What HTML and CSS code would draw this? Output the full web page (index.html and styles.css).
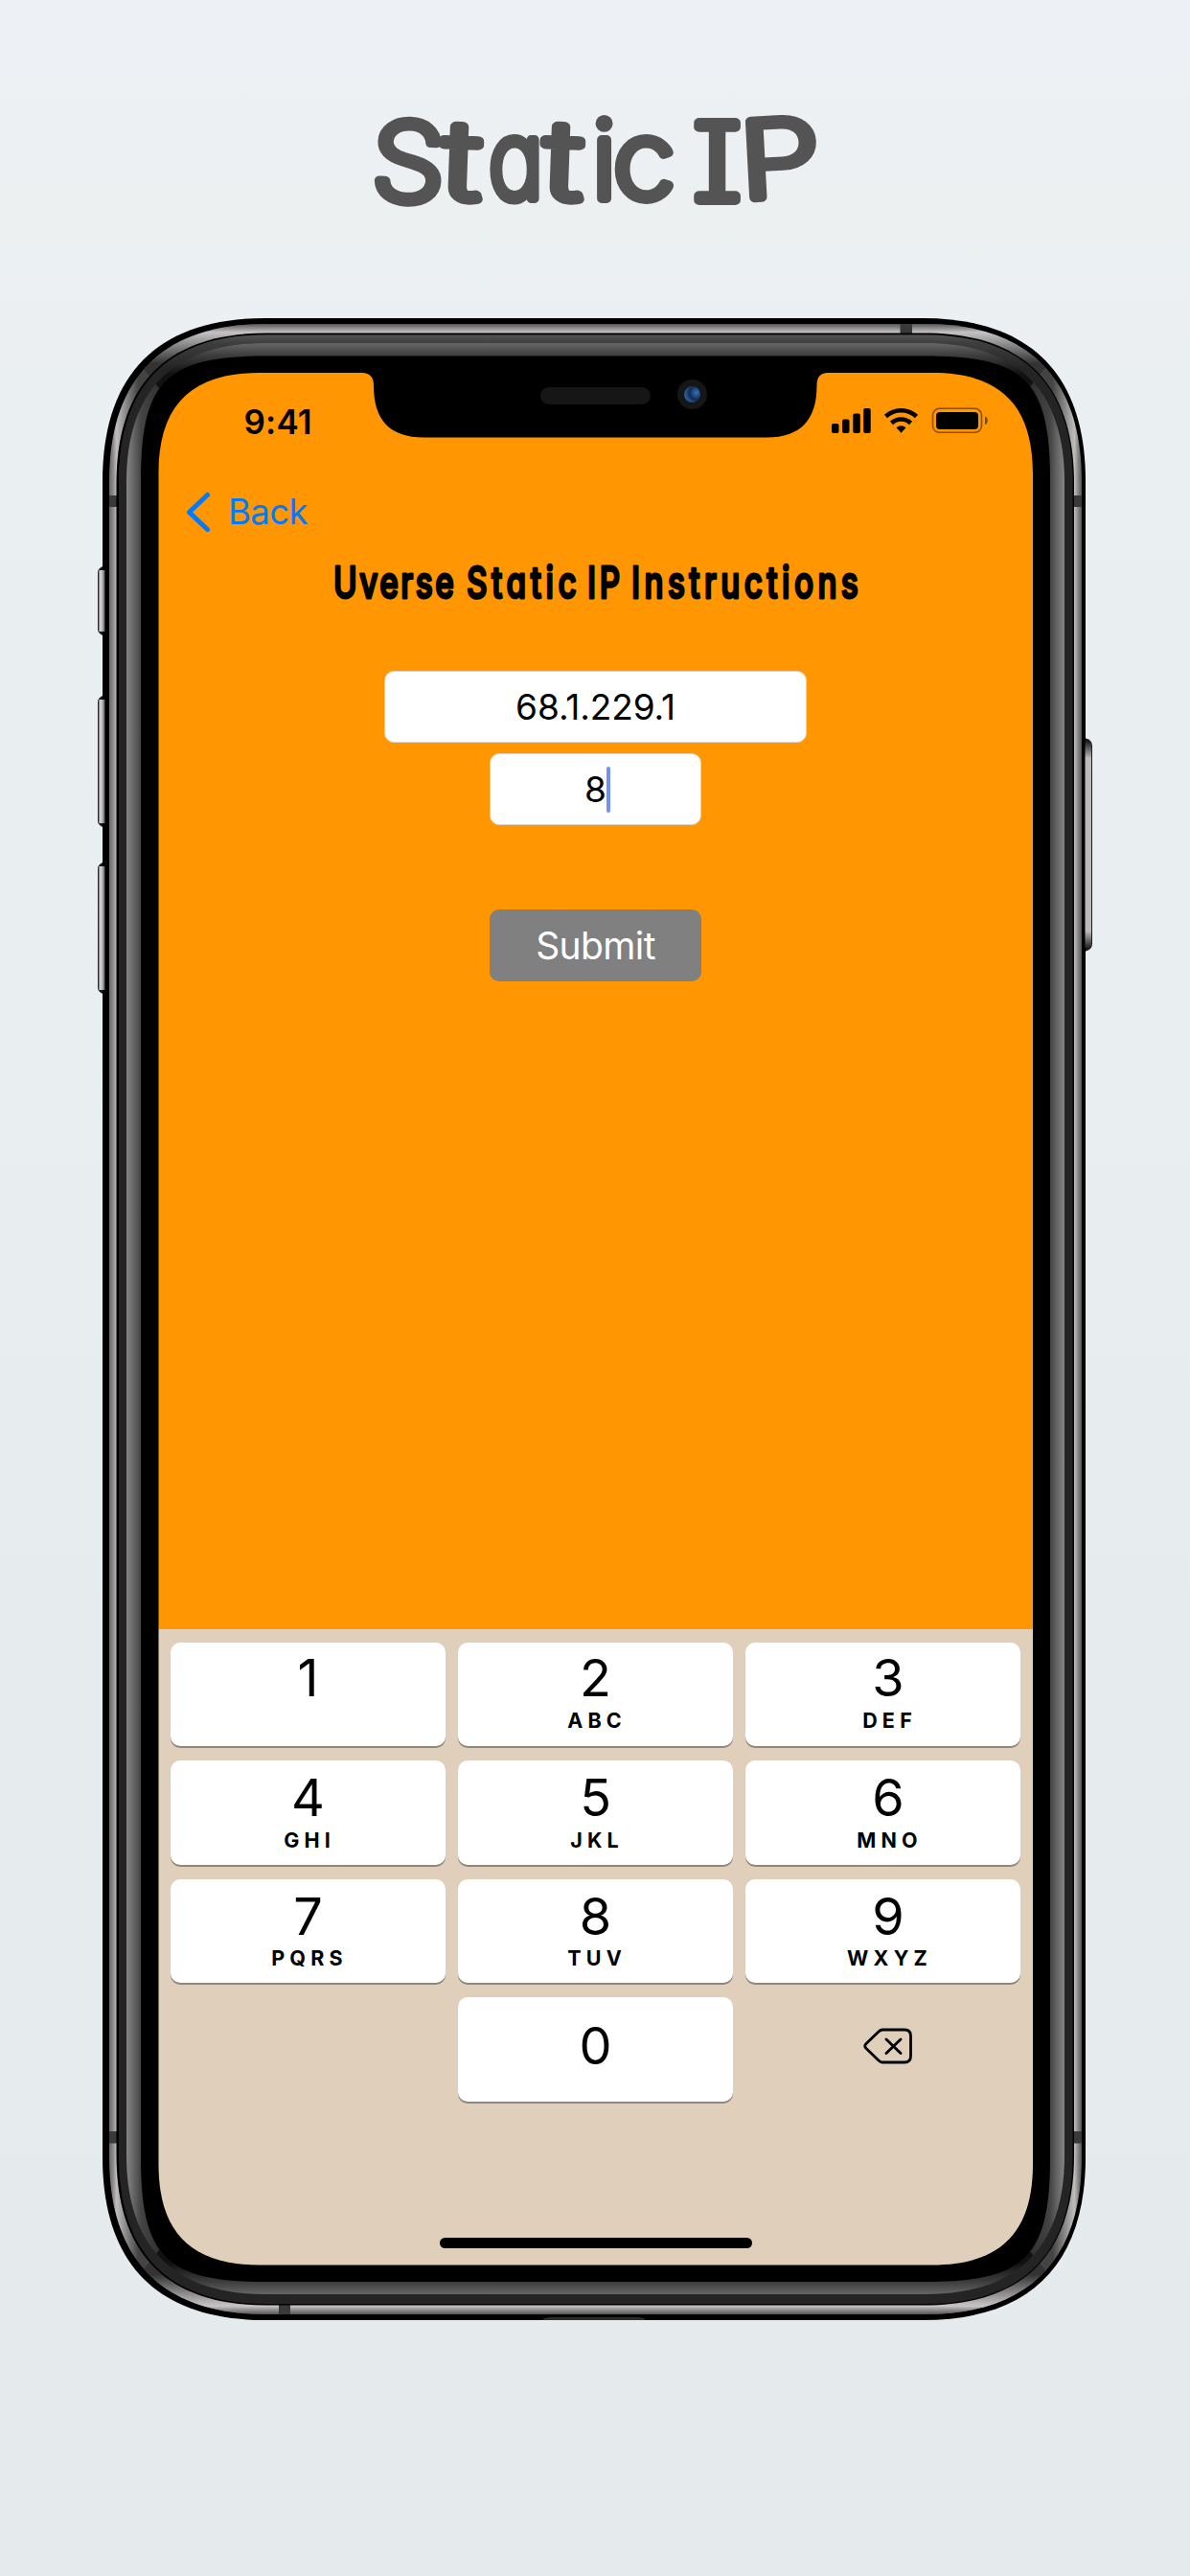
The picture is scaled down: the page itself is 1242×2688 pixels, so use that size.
FILE: index.html
```html
<!DOCTYPE html>
<html lang="en">
<head>
<meta charset="utf-8">
<title>Static IP</title>
<link rel="stylesheet" href="styles.css">
</head>
<body>
<main class="page">
  <svg class="headline" viewBox="360 90 520 150" role="heading" aria-label="Static IP">
    <g class="headline-text">
      <text transform="translate(387 208) rotate(2) scale(1.090 1)">S</text>
      <text transform="translate(461 207) rotate(2) scale(1.300 1)">t</text>
      <text transform="translate(510 207) scale(.860 1)">a</text>
      <text transform="translate(567 207) rotate(2) scale(1.300 1)">t</text>
      <text transform="translate(618 207)">i</text>
      <text transform="translate(640 207) scale(1.050 1)">c</text>
      <text transform="translate(723 209) scale(1.150 1)">I</text>
      <text transform="translate(774 207) rotate(-3) scale(1.210 .980)">P</text>
    </g>
  </svg>

  <section class="phone">
    <svg class="frame" viewBox="102 332 1039 2089" aria-hidden="true">
      <defs>
        <linearGradient id="metalSide" gradientUnits="userSpaceOnUse" x1="114" x2="1129" y1="0" y2="0">
          <stop offset="0" stop-color="#6a6868"/><stop offset=".004" stop-color="#8d8a8b"/><stop offset=".0075" stop-color="#c0bdbe"/><stop offset=".03" stop-color="#444"/>
          <stop offset=".97" stop-color="#444"/><stop offset=".9925" stop-color="#c0bdbe"/><stop offset=".996" stop-color="#8d8a8b"/><stop offset="1" stop-color="#555"/>
        </linearGradient>
        <linearGradient id="metalTop" gradientUnits="userSpaceOnUse" x1="0" x2="0" y1="338" y2="2415">
          <stop offset="0" stop-color="#555"/><stop offset=".002" stop-color="#8b8888"/><stop offset=".0042" stop-color="#c4c2c2"/><stop offset=".02" stop-color="#333"/>
          <stop offset=".98" stop-color="#333"/><stop offset=".9958" stop-color="#c8c5c6"/><stop offset=".998" stop-color="#8b8888"/><stop offset="1" stop-color="#555"/>
        </linearGradient>
        <linearGradient id="rimSide" gradientUnits="userSpaceOnUse" x1="132" x2="1111" y1="0" y2="0">
          <stop offset="0" stop-color="#858585"/><stop offset=".0155" stop-color="#444"/><stop offset=".05" stop-color="#222"/>
          <stop offset=".95" stop-color="#222"/><stop offset=".9845" stop-color="#444"/><stop offset="1" stop-color="#858585"/>
        </linearGradient>
        <linearGradient id="rimTop" gradientUnits="userSpaceOnUse" x1="0" x2="0" y1="358" y2="2394">
          <stop offset="0" stop-color="#666"/><stop offset=".0065" stop-color="#3c3c3c"/><stop offset=".016" stop-color="#111"/>
          <stop offset=".984" stop-color="#111"/><stop offset=".9935" stop-color="#3c3c3c"/><stop offset="1" stop-color="#666"/>
        </linearGradient>
        <linearGradient id="lipTop" gradientUnits="userSpaceOnUse" x1="0" x2="0" y1="349" y2="385">
          <stop offset="0" stop-color="#555"/><stop offset=".25" stop-color="#3e3e3e"/><stop offset="1" stop-color="#242424"/>
        </linearGradient>
        <linearGradient id="key" x1="0" x2="1" y1="0" y2="0">
          <stop offset="0" stop-color="#333"/><stop offset=".25" stop-color="#d0cecd"/><stop offset=".55" stop-color="#c4c2c2"/><stop offset="1" stop-color="#555"/>
        </linearGradient>
        <linearGradient id="rightKey" x1="0" x2="0" y1="0" y2="1">
          <stop offset="0" stop-color="#222"/><stop offset=".08" stop-color="#bcbaba"/><stop offset=".92" stop-color="#bcbaba"/><stop offset="1" stop-color="#222"/>
        </linearGradient>
        <radialGradient id="lens" cx=".75" cy=".4" r=".7">
          <stop offset="0" stop-color="#2f73b8"/><stop offset=".6" stop-color="#142a55"/><stop offset="1" stop-color="#2a5f9c"/>
        </radialGradient>
        <clipPath id="ends"><path d="M107 332H1133L900 620H340ZM107 2421H1133L900 2133H340Z"/></clipPath>
      </defs>
      <g fill="#1c1c1c">
        <path d="M110 590q-8 2-8 8v58q0 6 8 8ZM110 725q-8 2-8 8v123q0 6 8 8ZM110 899q-8 2-8 8v123q0 6 8 8Z"/>
        <path d="M1132 770q8 2 8 8v207q0 6-8 8Z"/>
      </g>
      <path d="M107 502c0-112 58-170 170-170H963c112 0 170 58 170 170V2251c0 112-58 170-170 170H277c-112 0-170-58-170-170Z"/>
      <g fill="url(#key)">
        <rect x="102.500" y="595" width="7" height="64"/><rect x="102.500" y="730" width="7" height="129"/><rect x="102.500" y="904" width="7" height="129"/>
      </g>
      <rect x="1132.500" y="774" width="6.500" height="215" fill="url(#rightKey)"/>
      <path fill="url(#metalSide)" d="M114 502c0-108 56-164 164-164H965c108 0 164 56 164 164V2251c0 108-56 164-164 164H278c-108 0-164-56-164-164Z"/>
      <path fill="url(#metalTop)" clip-path="url(#ends)" d="M114 502c0-108 56-164 164-164H965c108 0 164 56 164 164V2251c0 108-56 164-164 164H278c-108 0-164-56-164-164Z"/>
      <path fill="#393939" d="M114 517h8v12h-8ZM1121 517h8v12h-8ZM114 2224h8v12.500h-8ZM1121 2224h8v12.500h-8ZM939.500 338h12.500v10h-12.500ZM291 2405h12v10h-12Z"/>
      <path d="M121.500 504.500c0-104 53-157 157-157H964c104 0 157 53 157 157V2248.500c0 104-53 157-157 157H278.500c-104 0-157-53-157-157Z"/>
      <path fill="#242424" d="M124 503.500c0-102 52-154 154-154H965.500c102 0 154 52 154 154V2250c0 102-52 154-154 154H278c-102 0-154-52-154-154Z"/>
      <path fill="url(#lipTop)" d="M124 503.500c0-102 52-154 154-154H965.500c102 0 154 52 154 154Z"/>
      <path fill="url(#rimSide)" d="M132 503c0-96 49-145 145-145H966c96 0 145 49 145 145V2249c0 96-49 145-145 145H277c-96 0-145-49-145-145Z"/>
      <path fill="url(#rimTop)" clip-path="url(#ends)" d="M132 503c0-96 49-145 145-145H966c96 0 145 49 145 145V2249c0 96-49 145-145 145H277c-96 0-145-49-145-145Z"/>
      <path d="M147 501.500c0-104 26-130 130-130H966c104 0 130 26 130 130V2251c0 104-26 130-130 130H277c-104 0-130-26-130-130Z"/>
      <path fill="#2b2b2b" d="M566 2421q2-3 8-3h92q6 0 8 3Z"/>
      <path fill="#ff9602" d="M165.500 494c0-71 34-105 105-105H378C386 389 390 394 390 402C390 438 406 456.500 443 456.500H800C836 456.500 852.500 438 852.500 402C852.500 394 856 389 864 389H973c71 0 105 34 105 105V1700H165.500Z"/>
      <path fill="#e0cfba" d="M165.500 1700H1078V2258.500c0 71-34 105-105 105H270.500c-71 0-105-34-105-105Z"/>
      <rect x="564" y="404" width="115" height="18" rx="9" fill="#161616"/>
      <circle cx="722.500" cy="411.500" r="15.500" fill="#161616"/><circle cx="722.500" cy="411.500" r="8.500" fill="url(#lens)"/>
    </svg>

    <div class="screen">
      <header class="status">
        <span class="time">9:41</span>
        <svg class="status-icons" viewBox="866 420 166 40" aria-hidden="true">
          <rect x="868" y="442" width="7.500" height="10" rx="2"/><rect x="879" y="437.500" width="7.500" height="14.500" rx="2"/><rect x="890.300" y="431.500" width="7.500" height="20.500" rx="2"/><rect x="901.200" y="426" width="7.500" height="26" rx="2"/>
          <g fill="none" stroke="#000" stroke-width="4.600"><path d="M924.500 434.500a23.500 23.500 0 0 1 32 0"/><path d="M930.500 441.500a14.500 14.500 0 0 1 20 0"/></g>
          <path d="M935.500 446.300a8 8 0 0 1 10 0l-5 5.500Z"/>
          <rect x="973.500" y="426.300" width="51" height="25" rx="7" fill="none" stroke="#000" stroke-opacity=".45" stroke-width="1.600"/>
          <rect x="977" y="430" width="44" height="18" rx="4"/>
          <path d="M1028 434.500q2.800 1 2.800 4.300t-2.800 4.300Z" fill-opacity=".5"/>
        </svg>
      </header>

      <nav class="back">
        <svg class="chevron" viewBox="192 510 28 48" aria-hidden="true"><path d="M216.500 516.500L197.500 534.500L216.500 552.500"/></svg>
        <span>Back</span>
      </nav>

      <svg class="title" viewBox="340 570 570 70" role="heading" aria-label="Uverse Static IP Instructions">
        <g class="title-text">
          <text transform="translate(348 624) scale(.740 1)" textLength="170">Uverse</text>
          <text transform="translate(487 624) scale(.740 1)" textLength="155">Static</text>
          <text transform="translate(613 624) scale(.740 1)" textLength="46">IP</text>
          <text transform="translate(659 624) scale(.740 1)" textLength="320">Instructions</text>
        </g>
      </svg>

      <form class="form">
        <div class="field wide">68.1.229.1</div>
        <div class="field">8<i class="caret"></i></div>
        <div class="submit">Submit</div>
      </form>

      <div class="keypad">
        <div class="key first"><b>1</b></div>
        <div class="key first"><b>2</b><small>ABC</small></div>
        <div class="key first last"><b>3</b><small>DEF</small></div>
        <div class="key"><b>4</b><small>GHI</small></div>
        <div class="key"><b>5</b><small>JKL</small></div>
        <div class="key last"><b>6</b><small>MNO</small></div>
        <div class="key"><b>7</b><small>PQRS</small></div>
        <div class="key"><b>8</b><small>TUV</small></div>
        <div class="key last"><b>9</b><small>WXYZ</small></div>
        <div class="blank"></div>
        <div class="key zero"><b>0</b></div>
        <div class="blank">
          <svg class="delete" viewBox="900 2114 54 42" aria-hidden="true"><path d="M921 2118H944Q950.500 2118 950.500 2124.500V2145.500Q950.500 2152 944 2152H921Q919 2152 917 2150L904 2137.500Q901.500 2135 904 2132.500L917 2120Q919 2118 921 2118ZM925 2128L940 2142.500M940 2128L925 2142.500"/></svg>
        </div>
      </div>
      <div class="home"></div>
    </div>
  </section>
</main>
</body>
</html>
```
FILE: styles.css
```css
* { box-sizing: border-box; }
body { margin: 0; }
.page {
  width: 1242px;
  height: 2688px;
  overflow: hidden;
  padding-top: 90px;
  background: linear-gradient(#edf1f5 0, #ecf0f1 240px, #eaeff2 500px, #e9eef0 1000px, #e6ebee 1700px, #e5ebed 100%);
  font-family: Inter, "Liberation Sans", sans-serif;
  color: #000;
}
.headline { display: block; width: 520px; height: 150px; margin-left: 360px; overflow: visible; }
.headline-text {
  font-size: 112px;
  font-weight: 250;
  font-feature-settings: "cv11", "cv08", "ss02";
  fill: #545454;
  stroke: #545454;
  stroke-width: 10px;
  stroke-linejoin: round;
}
.phone { position: relative; width: 1039px; height: 2089px; margin: 92px 0 0 102px; }
.frame { position: absolute; inset: 0; width: 1039px; height: 2089px; }
.screen {
  position: relative;
  display: flex;
  flex-direction: column;
  width: 912px;
  height: 2032px;
  margin-left: 63.5px;
  padding-top: 88px;
}
.status { display: flex; justify-content: space-between; align-items: center; height: 40px; padding: 0 45.5px 0 89px; }
.time { font-size: 35px; font-weight: 600; letter-spacing: .2px; }
.status-icons { width: 166px; height: 40px; }
.back { display: flex; align-items: center; gap: 18px; height: 48px; margin: 50px 0 0 26.500px; color: #007aff; font-size: 36.500px; letter-spacing: -.6px; }
.chevron { width: 28px; height: 48px; fill: none; stroke: #007aff; stroke-width: 5; stroke-linecap: round; stroke-linejoin: round; }
.title { width: 570px; height: 70px; margin: 12px 0 0 174.500px; overflow: visible; }
.title-text { font-size: 45px; font-weight: 500; font-feature-settings: "cv11"; stroke: #000; stroke-width: 2.800px; stroke-linejoin: round; }
.form { display: flex; flex-direction: column; align-items: center; margin-top: 60px; height: 1000px; }
.field, .submit { display: flex; justify-content: center; align-items: center; width: 221px; height: 75px; border-radius: 10px; }
.field { margin-bottom: 11px; border: 1px solid #d9d3cb; background: #fff; font-size: 37px; letter-spacing: -.1px; }
.field.wide { width: 441px; }
.caret { width: 4.500px; height: 48px; margin-right: -4.500px; border-radius: 2px; background: #7590f5; }
.submit { margin-top: 77px; background: #808080; color: #fff; font-size: 39px; letter-spacing: -.6px; }
.keypad { display: grid; grid-template-columns: repeat(3, 286.500px); grid-auto-rows: 108.500px; gap: 15px 13.500px; padding: 13.500px 0 0 12.800px; }
.key { display: flex; flex-direction: column; align-items: center; padding-top: 12px; border-radius: 10px; background: #fff; box-shadow: 0 2px 0 #90867a; }
.key.last { padding-left: 11px; }
.key b { font-size: 54px; font-weight: 380; line-height: 54px; height: 54px; }
.key small { margin-top: 4.500px; padding-left: 3px; font-size: 21.500px; font-weight: 650; line-height: 24px; letter-spacing: 5.200px; }
.key.first b { margin-top: -2px; margin-bottom: 1px; }
.key.zero { padding-top: 24px; }
.blank { display: flex; justify-content: center; align-items: center; }
.delete { width: 54px; height: 42px; margin: -7px 0 0 11px; fill: none; stroke: #000; stroke-width: 2.800; stroke-linecap: round; stroke-linejoin: round; }
.home { width: 326px; height: 11px; margin: 142px 0 0 293px; border-radius: 6px; background: #000; }
```
